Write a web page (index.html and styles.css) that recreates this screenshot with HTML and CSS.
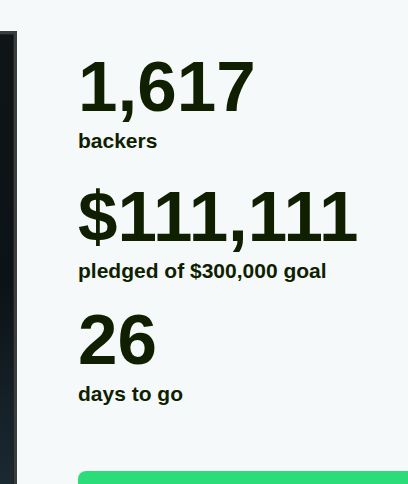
FILE: index.html
```html
<!DOCTYPE html>
<html lang="en">
<head>
    <meta charset="UTF-8">
    <meta name="viewport" content="width=device-width, initial-scale=1.0">
    <title>Campaign stats</title>
    <link rel="stylesheet" href="styles.css">
</head>
<body>

<div class="page">
    <!-- Video frame, cut off on the left -->
    <div class="video"></div>

    <!-- Campaign numbers -->
    <div class="stats">
        <div class="stat stat-backers">
            <div class="stat-num">1,617</div>
            <div class="stat-label">backers</div>
        </div>
        <div class="stat stat-pledged">
            <div class="stat-num">$111,111</div>
            <div class="stat-label">pledged of $300,000 goal</div>
        </div>
        <div class="stat">
            <div class="stat-num">26</div>
            <div class="stat-label">days to go</div>
        </div>
        <button class="back-btn"></button>
    </div>
</div>

</body>
</html>
```

FILE: styles.css
```css
html, body { margin: 0; height: 100%; }
body { font-family: "Liberation Sans", Arial, sans-serif; background-color: #f5f9fa; color: #0f1f00; overflow: hidden; }
.page { display: flex; height: 100%; }

.video { width: 14px; margin-top: 31px; flex-shrink: 0; background: linear-gradient(180deg, #0f1416 0%, #0c1316 55%, #1b2933 100%); border: 3px solid #3b3d3d; border-left: none; border-bottom: none; box-shadow: inset -1px 1px 0 #222; }

.stats { padding: 51px 0 0 61px; flex: 1; }
.stat-backers { margin-bottom: 28px; }
.stat-pledged { margin-bottom: 21px; }
.stat-num { font-size: 71px; font-weight: bold; line-height: 72px; }
.stat-label { margin-top: 6px; font-size: 21px; font-weight: bold; line-height: 24px; }

.back-btn { display: block; width: 100%; height: 13px; margin-top: 65px; border: none; border-radius: 8px 0 0 0; background-color: #2bdd78; }
```
